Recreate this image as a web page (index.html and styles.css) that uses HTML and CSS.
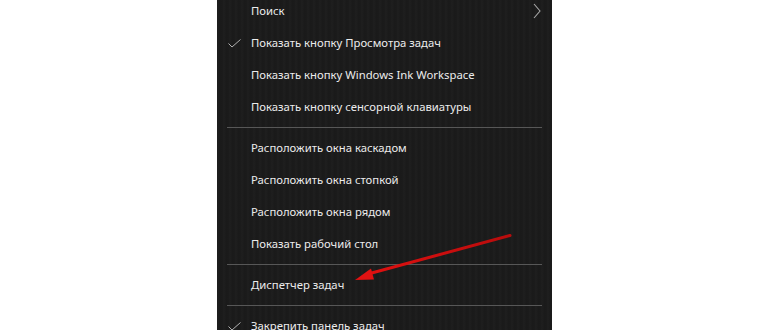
FILE: index.html
```html
<!DOCTYPE html>
<html lang="ru">
<head>
<meta charset="utf-8">
<link rel="stylesheet" href="styles.css">
</head>
<body>
<div class="stage">
  <div class="menu">
    <div class="item"><span class="check"></span><span class="label">Поиск</span>
      <svg class="chev" width="8" height="16" viewBox="0 0 8 16"><path d="M1 1 L7 8 L1 15" fill="none" stroke="#a8a8a8" stroke-width="1.1"/></svg>
    </div>
    <div class="item"><span class="check"><svg width="13" height="9" viewBox="0 0 13 9"><path d="M0.5 4.5 L4 8 L12.5 0.5" fill="none" stroke="#b0b0b0" stroke-width="1"/></svg></span><span class="label">Показать кнопку Просмотра задач</span></div>
    <div class="item"><span class="check"></span><span class="label">Показать кнопку Windows Ink Workspace</span></div>
    <div class="item"><span class="check"></span><span class="label">Показать кнопку сенсорной клавиатуры</span></div>
    <div class="sep"></div>
    <div class="item"><span class="check"></span><span class="label">Расположить окна каскадом</span></div>
    <div class="item"><span class="check"></span><span class="label">Расположить окна стопкой</span></div>
    <div class="item"><span class="check"></span><span class="label">Расположить окна рядом</span></div>
    <div class="item"><span class="check"></span><span class="label">Показать рабочий стол</span></div>
    <div class="sep"></div>
    <div class="item"><span class="check"></span><span class="label">Диспетчер задач</span></div>
    <div class="sep"></div>
    <div class="item"><span class="check"><svg width="13" height="9" viewBox="0 0 13 9"><path d="M0.5 4.5 L4 8 L12.5 0.5" fill="none" stroke="#b0b0b0" stroke-width="1"/></svg></span><span class="label">Закрепить панель задач</span></div>
  </div>
  <svg class="arrow" width="770" height="330" viewBox="0 0 770 330">
    <defs>
      <linearGradient id="ag" x1="0" y1="0" x2="1" y2="0">
        <stop offset="0" stop-color="#e01010"/>
        <stop offset="1" stop-color="#b80c0c"/>
      </linearGradient>
    </defs>
    <path d="M510 235.5 L368 274" stroke="url(#ag)" stroke-width="3" stroke-linecap="round" fill="none"/>
    <path d="M355 280 L371 268.5 L374 279.5 Z" fill="#e01212"/>
  </svg>
</div>
</body>
</html>
```

FILE: styles.css
```css
html, body {
  margin: 0;
  padding: 0;
  background: #ffffff;
}
.stage {
  position: relative;
  width: 770px;
  height: 330px;
  overflow: hidden;
}
.menu {
  margin-left: 217px;
  margin-top: -5px;
  width: 335px;
  background: #1b1b1b;
  background-image: repeating-linear-gradient(90deg, rgba(255,255,255,0.012) 0px, rgba(255,255,255,0.012) 2px, rgba(0,0,0,0.05) 3px, rgba(0,0,0,0) 6px);
  font-family: "Noto Sans", "Open Sans", sans-serif;
  font-size: 11.3px;
  color: #ececec;
  padding-bottom: 20px;
}
.item {
  height: 32px;
  display: flex;
  align-items: center;
  position: relative;
}
.check {
  width: 34px;
  display: flex;
  box-sizing: border-box;
  padding-left: 11px;
  justify-content: flex-start;
}
.label {
  white-space: nowrap;
  line-height: 16px;
}
.chev {
  margin-left: auto;
  margin-right: 11px;
}
.sep {
  height: 9px;
  display: flex;
  align-items: center;
  padding: 0 10px;
}
.sep::before {
  content: "";
  display: block;
  height: 1px;
  flex: 1;
  background: #575757;
}
.arrow {
  position: absolute;
  left: 0;
  top: 0;
}
```
